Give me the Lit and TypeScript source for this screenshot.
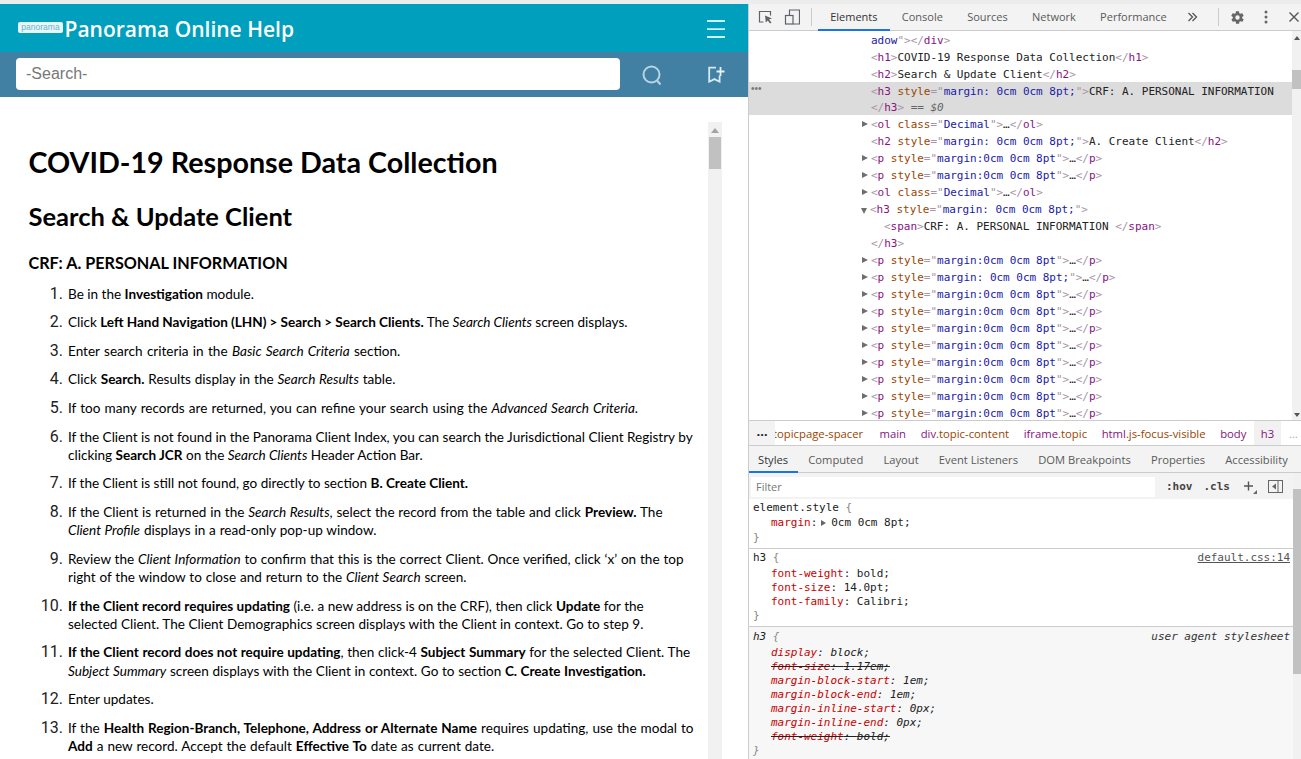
import { LitElement, html, css, nothing } from "lit";
import { customElement } from "lit/decorators.js";

const tag = (s: string) => html`<span class="t">${s}</span>`;
const br = (s: string) => html`<span class="b">${s}</span>`;
const an = (s: string) => html`<span class="an">${s}</span>`;
const av = (s: string) => html`<span class="av">${s}</span>`;
const styled = (name: string, val: string, rest: unknown) =>
  html`${br("<")}${tag(name)} ${an("style")}${br('="')}${av(val)}${br('">')}${rest}`;
const pRow = (val: string, n = "p") =>
  html`${styled(n, val, html`<span class="d">…</span>`)}${br("</")}${tag(n)}${br(">")}`;
const olRow = html`${br("<")}${tag("ol")} ${an("class")}${br('="')}${av("Decimal")}${br('">')}<span class="d">…</span>${br("</")}${tag("ol")}${br(">")}`;
const M = "margin:0cm 0cm 8pt";

type Row = { c: unknown; arrow?: "r" | "d"; ind?: number; sel?: string; dots?: boolean };
const rows: Row[] = [
  { c: html`${av("adow")}${br('"></')}${tag("div")}${br(">")}` },
  { c: html`${br("<")}${tag("h1")}${br(">")}<span class="d">COVID-19 Response Data Collection</span>${br("</")}${tag("h1")}${br(">")}` },
  { c: html`${br("<")}${tag("h2")}${br(">")}<span class="d">Search &amp; Update Client</span>${br("</")}${tag("h2")}${br(">")}` },
  { sel: "sel1", dots: true, c: styled("h3", "margin: 0cm 0cm 8pt;", html`<span class="d">CRF: A. PERSONAL INFORMATION</span>`) },
  { sel: "sel2", c: html`${br("</")}${tag("h3")}${br(">")} <span class="eq">== $0</span>` },
  { arrow: "r", c: olRow },
  { c: html`${styled("h2", "margin: 0cm 0cm 8pt;", html`<span class="d">A. Create Client</span>`)}${br("</")}${tag("h2")}${br(">")}` },
  { arrow: "r", c: pRow(M) },
  { arrow: "r", c: pRow(M) },
  { arrow: "r", c: olRow },
  { arrow: "d", c: styled("h3", "margin: 0cm 0cm 8pt;", nothing) },
  { ind: 1, c: html`${br("<")}${tag("span")}${br(">")}<span class="d">CRF: A. PERSONAL INFORMATION </span>${br("</")}${tag("span")}${br(">")}` },
  { c: html`${br("</")}${tag("h3")}${br(">")}` },
  { arrow: "r", c: pRow(M) },
  { arrow: "r", c: pRow("margin: 0cm 0cm 8pt;") },
  ...Array.from({ length: 8 }, () => ({ arrow: "r" as const, c: pRow(M) })),
];

const steps: [unknown, number][] = [
  [html`Be in the <b>Investigation</b> module.`, 0],
  [html`Click <b>Left Hand Navigation (LHN) &gt; Search &gt; Search Clients.</b> The <i>Search Clients</i> screen displays.`, -0.15],
  [html`Enter search criteria in the <i>Basic Search Criteria</i> section.`, 0.9],
  [html`Click <b>Search.</b> Results display in the <i>Search Results</i> table.`, 0.4],
  [html`If too many records are returned, you can refine your search using the <i>Advanced Search Criteria</i>.`, 0.7],
  [html`If the Client is not found in the Panorama Client Index, you can search the Jurisdictional Client Registry by<br />clicking <b>Search JCR</b> on the <i>Search Clients</i> Header Action Bar.`, 0],
  [html`If the Client is still not found, go directly to section <b>B. Create Client.</b>`, 0],
  [html`If the Client is returned in the <i>Search Results</i>, select the record from the table and click <b>Preview.</b> The<br /><i>Client Profile</i> displays in a read-only pop-up window.`, 0.35],
  [html`Review the <i>Client Information</i> to confirm that this is the correct Client. Once verified, click ‘x’ on the top<br />right of the window to close and return to the <i>Client Search</i> screen.`, 0.4],
  [html`<b>If the Client record requires updating</b> (i.e. a new address is on the CRF), then click <b>Update</b> for the<br />selected Client. The Client Demographics screen displays with the Client in context. Go to step 9.`, 0.1],
  [html`<b>If the Client record does not require updating</b>, then click-4 <b>Subject Summary</b> for the selected Client. The<br /><i>Subject Summary</i> screen displays with the Client in context. Go to section <b>C. Create Investigation.</b>`, 0.2],
  [html`Enter updates.`, 0],
  [html`If the <b>Health Region-Branch, Telephone, Address or Alternate Name</b> requires updating, use the modal to<br /><b>Add</b> a new record. Accept the default <b>Effective To</b> date as current date.`, 0.55],
];

const uaProps: [string, string, boolean][] = [
  ["display", "block", false],
  ["font-size", "1.17em", true],
  ["margin-block-start", "1em", false],
  ["margin-block-end", "1em", false],
  ["margin-inline-start", "0px", false],
  ["margin-inline-end", "0px", false],
  ["font-weight", "bold", true],
];

@customElement("app-root")
export class AppRoot extends LitElement {
  static styles = css`
    :host { display: block; width: 1301px; height: 759px; overflow: hidden; background: #fff; }
    .root { display: flex; flex-direction: column; height: 759px; }
    .topline { height: 4px; flex: none; background: #ececec; }
    .main { display: flex; flex: 1; min-height: 0; }
    .help { width: 748px; flex: none; display: flex; flex-direction: column; min-height: 0; }
    .head { height: 48px; flex: none; background: #009fbe; display: flex; align-items: center; padding: 0 23px 0 18px; }
    .logo { width: 45px; height: 11px; background: #e8f7fb; border-radius: 2px; color: #62b4cd; font: 8.5px/11px "Liberation Sans", sans-serif; text-align: center; margin-top: -2px; flex: none; }
    .title { font: 600 21px/1 "Open Sans", sans-serif; color: #fff; margin: 3px 0 0 1.5px; flex: 1; }
    .burger { display: block; margin-top: 1px; }
    .searchbar { height: 45px; flex: none; background: #417fa3; display: flex; align-items: center; padding: 0 0 0 16px; }
    .input { width: 604px; height: 32px; box-sizing: border-box; background: #fff; border-radius: 4px; font: 16px/32px "Liberation Sans", sans-serif; color: #777; padding-left: 10px; margin-top: -1px; }
    .sicon { margin-left: 21px; display: block; }
    .bicon { margin-left: 45px; display: block; }
    .content { flex: 1; min-height: 0; display: flex; overflow: hidden; padding-left: 28.5px; }
    .doc { width: 679.5px; flex: none; font: 13.55px/18.2px Lato, sans-serif; color: #000; }
    h1 { font: 700 28.7px/34px Lato, sans-serif; margin: 48px 0 0; }
    h2 { font: 700 25.5px/30px Lato, sans-serif; margin: 22px 0 0; }
    h3 { font: 700 16.2px/22px Lato, sans-serif; margin: 21px 0 0; }
    .steps { display: grid; grid-template-columns: 34.5px 1fr; column-gap: 5px; row-gap: 10.4px; margin-top: 10.6px; }
    .num { text-align: right; font: 16px/18.2px Roboto, sans-serif; color: #222; }
    .sb { width: 14px; flex: none; margin-top: 25px; background: #f1f1f1; display: flex; flex-direction: column; align-items: center; }
    .sb .up { width: 0; height: 0; border-left: 4px solid transparent; border-right: 4px solid transparent; border-bottom: 5px solid #a3a3a3; margin-top: 6px; }
    .sb .thumb { width: 12px; height: 32px; background: #c1c1c1; margin-top: 4px; }

    .dt { flex: 1; min-width: 0; border-left: 1px solid #ccc; display: flex; flex-direction: column; font: 11px "Open Sans", sans-serif; color: #5a5a5a; background: #fff; }
    .tabs { height: 26px; flex: none; background: #f3f3f3; border-bottom: 1px solid #ccc; display: flex; align-items: stretch; }
    .tabs svg { display: block; align-self: center; flex: none; }
    .tab { display: flex; align-items: center; padding: 0 12.15px; white-space: nowrap; border-bottom: 2px solid transparent; margin-bottom: -1px; }
    .tab.on { border-bottom-color: #1a73e8; color: #333; }
    .vsep { width: 1px; height: 18px; background: #ccc; align-self: center; flex: none; }
    .tree { height: 390px; flex: none; display: flex; font: 11px/17px "DejaVu Sans Mono", monospace; letter-spacing: -0.02px; overflow: hidden; border-bottom: 1px solid #ccc; box-sizing: border-box; }
    .tree-in { flex: 1; min-width: 0; padding-top: 1px; }
    .row { height: 17px; display: flex; padding-left: 122px; white-space: pre; position: relative; }
    .row.sel1 { background: #dcdcdc; margin-top: -1px; padding-top: 1px; }
    .row.sel2 { background: #dcdcdc; height: 15px; line-height: 15px; margin-bottom: 1px; }
    .row.i1 { padding-left: 135px; }
    .arr { width: 0; height: 0; margin: 5px 3px 0 -9px; flex: none; }
    .arr.r { border-top: 3.5px solid transparent; border-bottom: 3.5px solid transparent; border-left: 6px solid #6e6e6e; }
    .arr.d { margin-top: 7px; margin-left: -10px; margin-right: 3px; border-left: 3.5px solid transparent; border-right: 3.5px solid transparent; border-top: 6px solid #6e6e6e; }
    .dots { position: absolute; left: 2px; top: -2px; color: #777; font: 10px/17px "Liberation Sans", sans-serif; }
    .t { color: #881280; }
    .b { color: #a894a6; }
    .an { color: #994500; }
    .av { color: #1a1aa6; }
    .d { color: #222; }
    .eq { color: #666; font-style: italic; }
    .tsb { width: 9px; flex: none; background: #f1f1f1; display: flex; flex-direction: column; align-items: center; }
    .tsb .thumb { width: 9px; height: 19px; background: #c1c1c1; margin-top: 30px; }
    .tup { width: 0; height: 0; border-left: 3px solid transparent; border-right: 3px solid transparent; border-bottom: 4px solid #555; margin-top: 5px; }
    .tdn { width: 0; height: 0; border-left: 3px solid transparent; border-right: 3px solid transparent; border-top: 4px solid #555; margin-bottom: 3px; }
    .crumbs { height: 25px; flex: none; background: #fff; border-bottom: 1px solid #ccc; box-sizing: border-box; display: flex; align-items: center; white-space: nowrap; overflow: hidden; font-size: 11.3px; }
    .cdots { width: 26px; height: 100%; background: #f3f3f3; flex: none; color: #222; text-align: center; font: 700 13px/20px "Open Sans", sans-serif; position: relative; z-index: 1; }
    .cr { padding: 0 7.3px; color: #881280; }
    .cr.first { padding-left: 0; margin-left: -5px; padding-right: 9px; }
    .cr i { font-style: normal; color: #994500; }
    .cr.on { background: #f1f1f1; height: 100%; display: flex; align-items: center; padding: 0 7px; }
    .cmore { color: #aaa; padding-left: 8px; }
    .stabs { height: 27px; flex: none; background: #f3f3f3; border-bottom: 1px solid #ccc; box-sizing: border-box; display: flex; align-items: stretch; font-size: 11.2px; }
    .stabs .tab { padding: 1px 10.1px 0; }
    .stabs .tab.on { padding: 1px 10px 0 9px; }
    .pane { flex: 1; min-height: 0; display: flex; overflow: hidden; }
    .rules { flex: 1; min-width: 0; display: flex; flex-direction: column; font: 11px/14px "DejaVu Sans Mono", monospace; letter-spacing: -0.02px; color: #222; }
    .filter { height: 25px; padding-top: 1px; flex: none; background: #f3f3f3; display: flex; align-items: center; }
    .finput { width: 404px; height: 20px; margin-left: 2px; background: #fff; font: 11px/20px "Open Sans", sans-serif; color: #777; padding-left: 5px; box-sizing: border-box; }
    .hov { font: 700 11px/20px "DejaVu Sans Mono", monospace; color: #444; margin-left: 11px; }
    .plus { margin-left: 13px; display: block; }
    .toggle { margin-left: 11px; display: block; }
    .rule { padding: 2px 3px 3px 4px; border-bottom: 1px solid #ccc; }
    .rule.first { line-height: 15px; padding: 1px 3px 3px 4px; }
    .rule.ua { border-bottom: 0; background: #f7f7f7; flex: 1; padding-top: 3px; }
    .head-row { display: flex; justify-content: space-between; margin-bottom: 2px; }
    .src { color: #545454; text-decoration: underline; }
    .ua-note { color: #333; font-style: italic; }
    .br { color: #888; }
    .p { padding-left: 18px; white-space: pre; }
    .pn { color: #c80000; }
    .pv { color: #222; }
    .struck { text-decoration: line-through; text-decoration-color: #222; }
    .tri { display: inline-block; width: 0; height: 0; border-top: 3.5px solid transparent; border-bottom: 3.5px solid transparent; border-left: 5px solid #666; margin: 0 5px 0 4px; }
    .ita { font-style: italic; }
    .psb { width: 8px; flex: none; background: #f1f1f1; display: flex; flex-direction: column; }
    .psb .thumb { width: 8px; height: 185px; background: #c1c1c1; margin-top: 16px; }
  `;

  render() {
    return html`<div class="root">
      <div class="topline"></div>
      <div class="main">
        <section class="help">
          <div class="head">
            <div class="logo">panorama</div>
            <div class="title">Panorama Online Help</div>
            <svg class="burger" width="18" height="18" viewBox="0 0 18 18"><path d="M0 1h18M0 9.2h18M0 17h18" stroke="#c8f4fa" stroke-width="1.8"/></svg>
          </div>
          <div class="searchbar">
            <div class="input">-Search-</div>
            <svg class="sicon" width="22" height="22" viewBox="0 0 22 22"><circle cx="10.5" cy="10.5" r="8" fill="none" stroke="#b8d4e2" stroke-width="2"/><path d="M16 16.5l3.5 4" stroke="#b8d4e2" stroke-width="2"/></svg>
            <svg class="bicon" width="17" height="17" viewBox="0 0 17 17"><path d="M8 1.7H1.2v14l5.2-2.6 5.2 2.6V9.5" fill="none" stroke="#d6e8f0" stroke-width="1.8"/><path d="M12.5 1v9M8.5 5.5h8" fill="none" stroke="#e6f2f6" stroke-width="1.8"/></svg>
          </div>
          <div class="content">
            <div class="doc">
              <h1>COVID-19 Response Data Collection</h1>
              <h2>Search &amp; Update Client</h2>
              <h3>CRF: A. PERSONAL INFORMATION</h3>
              <div class="steps">
                ${steps.map(([s, ws], i) => html`<div class="num">${i + 1}.</div><div style="word-spacing:${ws}px">${s}</div>`)}
              </div>
            </div>
            <div class="sb"><div class="up"></div><div class="thumb"></div></div>
          </div>
        </section>
        <section class="dt">
          <div class="tabs">
            <svg style="margin-left:9px" width="16" height="16" viewBox="0 0 16 16"><path d="M5.5 13H1.5V2.5h11v4" fill="none" stroke="#5f6368" stroke-width="1.2"/><path d="M7 6.5l7 3-3 1 2.5 3-1.5 1-2.2-3-2 2z" fill="#5f6368"/></svg>
            <svg style="margin-left:10px" width="16" height="16" viewBox="0 0 16 16"><path d="M5.5 6V1h10v14H9" fill="none" stroke="#5f6368" stroke-width="1.2"/><rect x="1.5" y="6.5" width="7.5" height="8.5" fill="none" stroke="#5f6368" stroke-width="1.2"/></svg>
            <div class="vsep" style="margin:0 6px 0 11px"></div>
            <div class="tab on">Elements</div>
            <div class="tab">Console</div>
            <div class="tab">Sources</div>
            <div class="tab">Network</div>
            <div class="tab">Performance</div>
            <svg style="margin-left:8px" width="12" height="10" viewBox="0 0 12 10"><path d="M1.5 1l4 4-4 4M5.5 1l4 4-4 4" fill="none" stroke="#555" stroke-width="1.3"/></svg>
            <div class="vsep" style="margin:0 11px 0 19px"></div>
            <svg width="15" height="15" viewBox="0 0 24 24"><path fill="#666" d="M19.4 13c.1-.3.1-.7.1-1s0-.7-.1-1l2.1-1.6c.2-.2.2-.4.1-.6l-2-3.5c-.1-.2-.4-.3-.6-.2l-2.5 1c-.5-.4-1.1-.7-1.7-1l-.4-2.6c0-.3-.2-.5-.5-.5h-4c-.3 0-.5.2-.5.4l-.4 2.7c-.6.2-1.1.6-1.7 1l-2.5-1c-.2-.1-.5 0-.6.2l-2 3.5c-.1.2-.1.5.1.6L4.6 11c0 .3-.1.7-.1 1s0 .7.1 1l-2.1 1.6c-.2.2-.2.4-.1.6l2 3.5c.1.2.4.3.6.2l2.5-1c.5.4 1.1.7 1.7 1l.4 2.6c0 .2.2.4.5.4h4c.3 0 .5-.2.5-.4l.4-2.6c.6-.3 1.2-.6 1.7-1l2.5 1c.2.1.5 0 .6-.2l2-3.5c.1-.2.1-.5-.1-.6zM12 15.5a3.5 3.5 0 1 1 0-7 3.5 3.5 0 0 1 0 7z"/></svg>
            <svg style="margin-left:19px" width="4" height="14" viewBox="0 0 4 14"><circle cx="2" cy="2" r="1.5" fill="#666"/><circle cx="2" cy="7" r="1.5" fill="#666"/><circle cx="2" cy="12" r="1.5" fill="#666"/></svg>
            <svg style="margin-left:21px" width="10" height="10" viewBox="0 0 10 10"><path d="M.5.5l9 9M9.5.5l-9 9" stroke="#555" stroke-width="1.4"/></svg>
          </div>
          <div class="tree">
            <div class="tree-in">
              ${rows.map((r) => html`<div class="row ${r.sel ?? ""} ${r.ind ? "i1" : ""}">${r.dots ? html`<span class="dots">•••</span>` : nothing}${r.arrow ? html`<span class="arr ${r.arrow}"></span>` : nothing}<span>${r.c}</span></div>`)}
            </div>
            <div class="tsb"><div class="tup"></div><div class="thumb"></div><div style="flex:1"></div><div class="tdn"></div></div>
          </div>
          <div class="crumbs">
            <div class="cdots">…</div>
            <span class="cr first"><i>.topicpage-spacer</i></span>
            <span class="cr">main</span>
            <span class="cr">div<i>.topic-content</i></span>
            <span class="cr">iframe<i>.topic</i></span>
            <span class="cr">html<i>.js-focus-visible</i></span>
            <span class="cr">body</span>
            <span class="cr on">h3</span>
            <span class="cmore">…</span>
          </div>
          <div class="stabs">
            <div class="tab on">Styles</div>
            <div class="tab">Computed</div>
            <div class="tab">Layout</div>
            <div class="tab">Event Listeners</div>
            <div class="tab">DOM Breakpoints</div>
            <div class="tab">Properties</div>
            <div class="tab">Accessibility</div>
          </div>
          <div class="pane">
            <div class="rules">
              <div class="filter">
                <div class="finput">Filter</div>
                <span class="hov">:hov</span>
                <span class="hov">.cls</span>
                <svg class="plus" width="14" height="14" viewBox="0 0 14 14"><path d="M1 6h9M5.5 1.5v9" stroke="#555" stroke-width="1.4"/><path d="M14 10v4h-4z" fill="#666"/></svg>
                <svg class="toggle" width="15" height="13" viewBox="0 0 15 13"><rect x=".5" y=".5" width="14" height="12" fill="none" stroke="#666"/><path d="M10 .5v12" stroke="#666"/><path d="M8 3.5v6L4 6.5z" fill="#666"/></svg>
              </div>
              <div class="rule first">
                <div>element.style <span class="br">{</span></div>
                <div class="p"><span class="pn">margin</span>:<span class="tri"></span><span class="pv">0cm 0cm 8pt</span>;</div>
                <div class="br">}</div>
              </div>
              <div class="rule">
                <div class="head-row"><span>h3 <span class="br">{</span></span><span class="src">default.css:14</span></div>
                <div class="p"><span class="pn">font-weight</span>: bold;</div>
                <div class="p"><span class="pn">font-size</span>: 14.0pt;</div>
                <div class="p"><span class="pn">font-family</span>: Calibri;</div>
                <div class="br">}</div>
              </div>
              <div class="rule ua ita">
                <div class="head-row"><span>h3 <span class="br">{</span></span><span class="ua-note">user agent stylesheet</span></div>
                ${uaProps.map(([n, v, s]) => html`<div class="p"><span class="${s ? "struck" : ""}"><span class="pn">${n}</span>: ${v};</span></div>`)}
                <div class="br">}</div>
              </div>
            </div>
            <div class="psb"><div class="thumb"></div></div>
          </div>
        </section>
      </div>
    </div>`;
  }
}
